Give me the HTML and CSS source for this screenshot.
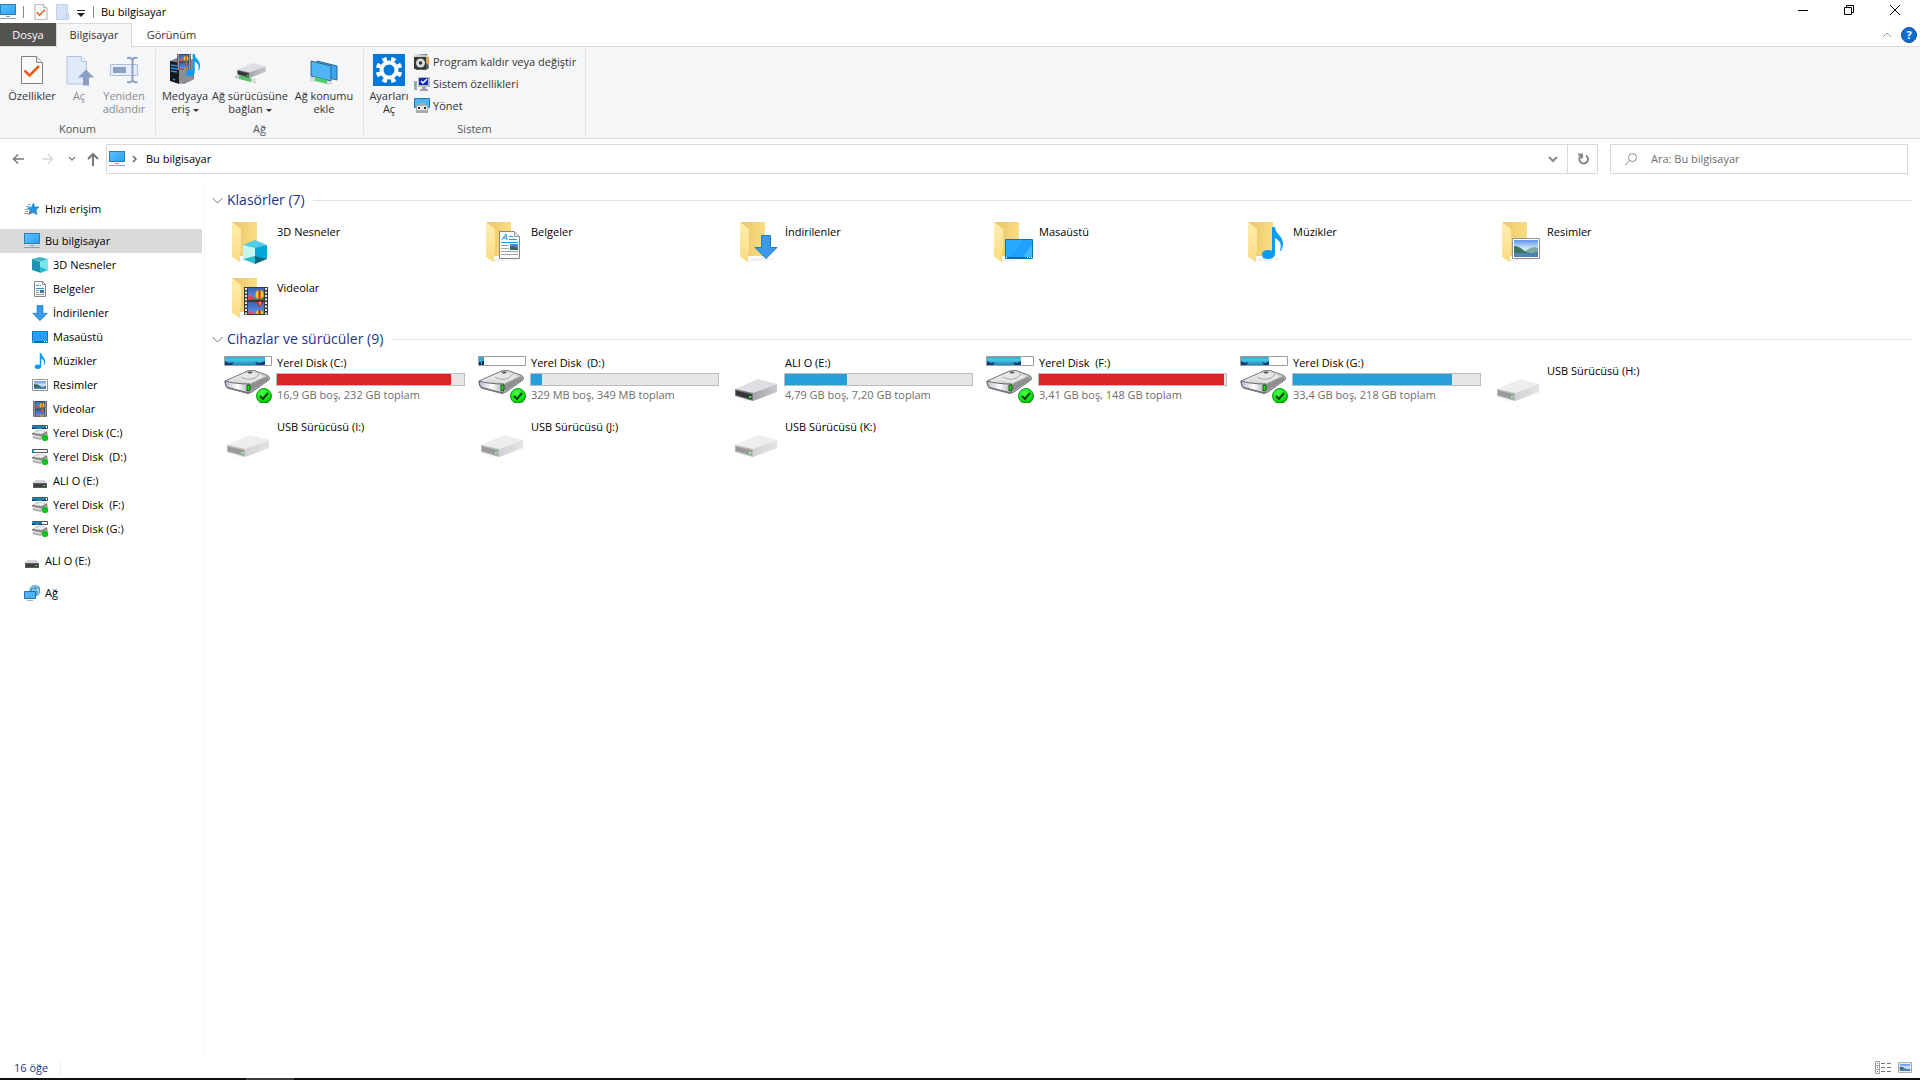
FILE: index.html
```html
<!DOCTYPE html>
<html lang="tr">
<head>
<meta charset="utf-8">
<meta name="viewport" content="width=device-width, initial-scale=1">
<title>Bu bilgisayar</title>
<link rel="stylesheet" href="styles.css">
</head>
<body>
<svg class="sprite" aria-hidden="true">
  <defs>
    <linearGradient id="g-screen" x1="0" y1="0" x2="1" y2="1"><stop offset="0" stop-color="#5fc0fd"/><stop offset=".55" stop-color="#3fb1fa"/><stop offset="1" stop-color="#2a9df0"/></linearGradient>
    <linearGradient id="g-back" x1="0" y1="0" x2="1" y2="0"><stop offset="0" stop-color="#eac666"/><stop offset="1" stop-color="#fbdd84"/></linearGradient>
    <linearGradient id="g-flap" x1="0" y1="0" x2="0" y2="1"><stop offset="0" stop-color="#ffeeb0"/><stop offset="1" stop-color="#fbdb82"/></linearGradient>
    <linearGradient id="g-cyan" x1="0" y1="0" x2="0" y2="1"><stop offset="0" stop-color="#35a9cc"/><stop offset=".35" stop-color="#4cc6e4"/><stop offset="1" stop-color="#1789b4"/></linearGradient>
    <linearGradient id="g-metal" x1="0" y1="0" x2="1" y2="1"><stop offset="0" stop-color="#f8f8f8"/><stop offset=".6" stop-color="#c9c9cb"/><stop offset="1" stop-color="#8f8f92"/></linearGradient>
    <linearGradient id="g-face" x1="0" y1="0" x2="1" y2="0"><stop offset="0" stop-color="#b9b9c6"/><stop offset=".5" stop-color="#fff"/><stop offset="1" stop-color="#a9a9b8"/></linearGradient>
    <linearGradient id="g-side" x1="0" y1="0" x2="1" y2="0"><stop offset="0" stop-color="#a5a6a9"/><stop offset="1" stop-color="#c9cacd"/></linearGradient>
    <linearGradient id="g-sky" x1="0" y1="0" x2="0" y2="1"><stop offset="0" stop-color="#5d93ee"/><stop offset=".5" stop-color="#d4e8f8"/><stop offset="1" stop-color="#5f8fba"/></linearGradient>
    <linearGradient id="g-film" x1="0" y1="0" x2="0" y2="1"><stop offset="0" stop-color="#3d63b8"/><stop offset="1" stop-color="#5b95ee"/></linearGradient>
    <radialGradient id="g-ok" cx=".4" cy=".3" r=".7"><stop offset="0" stop-color="#4dff4d"/><stop offset=".7" stop-color="#0be80f"/><stop offset="1" stop-color="#07a30b"/></radialGradient>
  </defs>

  <symbol id="pc" viewBox="0 0 16 16"><rect x=".5" y=".5" width="15" height="10" fill="url(#g-screen)" stroke="#2f7fae"/><path d="M6 12.500h4M0 14.500h16" stroke="#7fa6c4"/></symbol>
  <symbol id="check-page" viewBox="0 0 22 28"><path d="M.5.500h15l6 6v21H.5z" fill="#fafafa" stroke="#7d7d7d"/><path d="M15.500.500v6h6" fill="#e6e6e6" stroke="#8b8b8b"/><path d="M3.500 14.500l5 5L18 10" fill="none" stroke="#f2590d" stroke-width="2.500"/></symbol>
  <symbol id="blue-page" viewBox="0 0 14 16"><path d="M.5.500h11v9h1.500v6H.5z" fill="#d5e1f5" stroke="#c3d2ec"/><path d="M10.500 9.500v6" stroke="#b4c6e4"/></symbol>
  <symbol id="open-page" viewBox="0 0 28 32"><path d="M2 2.500h14.500l5 5V30H2z" fill="#e0eaf8" stroke="#b3c4e0"/><path d="M16.500 2.500v5h5" fill="#edf3fc" stroke="#b3c4e0"/><path d="M21 15.500l8 8h-5v8h-6v-8h-5z" fill="#8a9fc4"/></symbol>
  <symbol id="rename" viewBox="0 0 28 28"><path d="M.5 8.500h27v11H.5z" fill="#e7eefa" stroke="#adbfdc"/><path d="M3 11h13v6H3z" fill="#8c9fc4"/><path d="M17 2q4.500-1 5.500 2 1-3 5-2M22.500 3v22M17 26q4.500 1 5.500-2 1 3 5 2" fill="none" stroke="#8c9fc4" stroke-width="2"/></symbol>

  <symbol id="film" viewBox="0 0 24 28"><path d="M0 0h24v28H0z" fill="#3a3a3a"/><path d="M2 1v27M22 1v27" stroke="#e8e8e8" stroke-width="2" stroke-dasharray="2 1.500"/><path d="M4 1h16v12H4z" fill="url(#g-film)"/><path d="M4 15h16v12H4z" fill="url(#g-film)"/><path d="M4 13l4-4 4 3 8-2v3z" fill="#288041"/><path d="M4 9l3-1 4 4-7 1z" fill="#e0435b"/><ellipse cx="15.500" cy="7.500" rx="4" ry="4.500" fill="#f6cb19"/><path d="M14.500 3h2v9h-2z" fill="#bf2b2e"/><path d="M12 15h7l-3 5h-1z" fill="#c82e34"/><path d="M15 15h2l-1 4z" fill="#f6cb19"/><path d="M12 27q0-4 3.500-4t3.500 4z" fill="#f6cb19"/><path d="M4 24l5 1 2 2H4z" fill="#d9506b"/><path d="M14.500 23h2v4h-2z" fill="#b92128"/></symbol>
  <symbol id="note" viewBox="0 0 21 32"><path d="M10 0h3q0 4 4 8 4 4 4 9 0 3-2 7h-1q2-7-1-10-2-2-4-3v15q0 6-7 6-6 0-6-4.500Q0 23 6 23q2 0 4 .8z" fill="#079df6"/></symbol>
  <symbol id="cube" viewBox="0 0 24 24"><path d="M12 0l12 5-12 4L0 5z" fill="#50cfe4"/><path d="M0 5l12 3v10L0 19z" fill="#c9f3f4"/><path d="M12 8l12-3v14l-12-1z" fill="#04a7d9"/><path d="M0 19l12-3v8z" fill="#2bbfce"/><path d="M12 16l12 3-12 5z" fill="#05677f"/></symbol>
  <symbol id="cube-small" viewBox="0 0 16 16"><path d="M8 0l8 2-6 3L0 2z" fill="#3fb5c4"/><path d="M0 2l9 3v11l-9-3z" fill="#1c93b0"/><path d="M8 5l8-3v11l-8 3z" fill="#7de6ec"/><path d="M8 10l8 3-8 3z" fill="#27bccb"/></symbol>
  <symbol id="doc" viewBox="0 0 21 28"><path d="M.5.500h15l5 5v22H.5z" fill="#fbfbfb" stroke="#858585"/><path d="M15.500.500v5h5" fill="#e4e4e4" stroke="#979797"/><path d="M3 9l4-6 1 6M4 7h4M10 5.500h4M10 8.500h8M2 11.500h17" stroke="#2196d8" fill="none"/><path d="M2 14.500h8M2 17.500h8M2 20.500h17M2 23.500h17" stroke="#a6a6a6"/><path d="M11 13h8v6h-8z" fill="#4d8cc7"/><path d="M11 16l3-1 5 2v2h-8z" fill="#3c6a57"/></symbol>
  <symbol id="doc-small" viewBox="0 0 16 16"><path d="M2.500.500h8l3 3v12h-11z" fill="#fbfbfb" stroke="#858585"/><path d="M10.500.500v3h3" fill="none" stroke="#979797"/><path d="M4 4.500h3M8 4.500h1M4 7.500h8" stroke="#2196d8"/><path d="M4 9.500h3M4 11.500h3M4 13.500h8" stroke="#999"/><path d="M8 9h4v3H8z" fill="#42739c"/></symbol>
  <symbol id="arrow" viewBox="0 0 24 24"><path d="M7.500.500h9v12h6.500L12 23.500 1 12.500h6.500z" fill="#3c98e8" stroke="#1b7cc5"/></symbol>
  <symbol id="desk" viewBox="0 0 28 20"><path d="M.5.500h27v19H.5z" fill="#1fa2fd" stroke="#0b77b5"/><path d="M1 1h17L6 18H1z" fill="#27a9ff"/><path d="M18 18L27 6v12z" fill="#46b6ff"/><path d="M1 18.500h26" stroke="#09609a"/><path d="M1 18.500h1M22 18.500h1M24 18.500h1M26 18.500h1" stroke="#fff"/></symbol>
  <symbol id="desk-small" viewBox="0 0 16 16"><path d="M.5 2.500h15v11H.5z" fill="#1fa2fd" stroke="#0b77b5"/><path d="M1 12.500h14" stroke="#09609a"/><path d="M1 12.500h1M12 12.500h1M14 12.500h1" stroke="#fff"/></symbol>
  <symbol id="pic" viewBox="0 0 28 21"><path d="M.5.500h27v20H.5z" fill="#fff" stroke="#949494"/><path d="M2 2h24v17H2z" fill="url(#g-sky)"/><path d="M2 8q5 0 9 4t15 2v2H2z" fill="#39745a"/><path d="M15 12q6-5 11-2v4H14z" fill="#7eaa9d"/><path d="M2 15h24v4H2z" fill="#5184b5"/></symbol>
  <symbol id="pic-small" viewBox="0 0 16 12"><path d="M.5.500h15v11H.5z" fill="#fff" stroke="#949494"/><path d="M2 2h12v8H2z" fill="url(#g-sky)"/><path d="M2 5q4 0 6 2t6 0v1H2z" fill="#2f6b56"/><path d="M2 8h12v2H2z" fill="#4a7fae"/></symbol>

  <symbol id="folder" viewBox="0 0 48 48"><path d="M12 46l8-4h22l-4 2z" fill="#000" opacity=".05"/><path d="M8 6h25v34H15z" fill="url(#g-back)"/><path d="M8 6l9 7v22l-1 2v9l-8-5z" fill="url(#g-flap)"/></symbol>

  <symbol id="disk" viewBox="0 0 46 24"><path d="M1 11L24 .8l6-.3 14 5q1.500 1 1.500 4L28 22l-4 1.500L3 18q-2-2-2-7z" fill="url(#g-metal)" stroke="#757578"/><path d="M9 8L26 2l14 4-12 8z" fill="#e6e6e8"/><path d="M17 7q6 4 14 1l4-4" fill="none" stroke="#a5a5a8"/><path d="M1 11q10 3 25 3 1 5-1 9L4 17.500Q1 16 1 11z" fill="url(#g-face)" stroke="#66666f"/><path d="M27 13l17-7v4L27 21z" fill="#66666a" opacity=".55"/><path d="M23 15h3v5l-3 1z" fill="#27d51d" stroke="#1b5e17"/><ellipse cx="26" cy="2.500" rx="2.500" ry="1" fill="#555"/></symbol>
  <symbol id="ok" viewBox="0 0 16 16"><circle cx="8" cy="8" r="7.500" fill="url(#g-ok)" stroke="#159819"/><path d="M4 8l3 3 5-6" fill="none" stroke="#0a3f0c" stroke-width="2"/></symbol>
  <symbol id="usb" viewBox="0 0 42 22"><path d="M5 22l13-1 24-10-4 0z" opacity=".08"/><path d="M0 10L23 0l19 5-24 10z" fill="#dedfe3"/><path d="M18 14L42 5v8L18 22z" fill="url(#g-side)"/><path d="M0 10l18 4v8L0 17z" fill="#77787a"/><path d="M1 11.500l16 4v5L1 16z" fill="#343536"/><path d="M14 17h2.500v2H14z" fill="#3de24a"/></symbol>
  <symbol id="usb-small" viewBox="0 0 14 8"><path d="M2 0h10l2 3H0z" fill="#d3d4d7"/><path d="M0 3h14v5H0z" fill="#5b5c5e"/><path d="M1 4h12v3H1z" fill="#3f4042"/><path d="M10 5h2v1h-2z" fill="#35df43"/></symbol>

  <symbol id="disk-c" viewBox="0 0 48 48"><path d="M.5 1.500h47v9H.5z" fill="#fff" stroke="#9d9d9d"/><path d="M1 2h40v8H1z" fill="url(#g-cyan)"/><path d="M1 6l4 2 5-1-2 3H1zM31 7l5 1 5-2v4h-8z" fill="#123a86"/><use href="#disk" x="0" y="15" width="46" height="24"/><use href="#ok" x="32" y="33" width="16" height="16"/></symbol>
  <symbol id="disk-d" viewBox="0 0 48 48"><path d="M.5 1.500h47v9H.5z" fill="#fff" stroke="#9d9d9d"/><path d="M1 2h5v8H1z" fill="#2caed2"/><path d="M1 7h2v3H1zM4 6h2v4H4z" fill="#11265c"/><use href="#disk" x="0" y="15" width="46" height="24"/><use href="#ok" x="32" y="33" width="16" height="16"/></symbol>
  <symbol id="disk-f" viewBox="0 0 48 48"><path d="M.5 1.500h47v9H.5z" fill="#fff" stroke="#9d9d9d"/><path d="M1 2h34v8H1z" fill="url(#g-cyan)"/><path d="M1 6l4 2 4-1-2 3H1zM27 7l4 1 4-2v4h-6z" fill="#123a86"/><use href="#disk" x="0" y="15" width="46" height="24"/><use href="#ok" x="32" y="33" width="16" height="16"/></symbol>
  <symbol id="disk-g" viewBox="0 0 48 48"><path d="M.5 1.500h47v9H.5z" fill="#fff" stroke="#9d9d9d"/><path d="M1 2h28v8H1z" fill="url(#g-cyan)"/><path d="M1 6l4 2 3-1-1 3H1zM22 7l4 1 3-2v4h-5z" fill="#123a86"/><use href="#disk" x="0" y="15" width="46" height="24"/><use href="#ok" x="32" y="33" width="16" height="16"/></symbol>
  <symbol id="mini-body" viewBox="0 0 16 16"><path d="M0 8l6-3 9 1 1 4-6 4-9-2z" fill="#a9aaac"/><path d="M1 8l6-2.500 8 1L10 9z" fill="#ececec"/><path d="M0 8.500l9 1.500 6-3" fill="none" stroke="#6c6e70"/><path d="M1 10.500l8 2" stroke="#f2f2f2"/><path d="M1 12.500l8 2" stroke="#909294"/><circle cx="13" cy="13" r="3" fill="#13c51b" stroke="#0e9a16" stroke-width=".5"/></symbol>
  <symbol id="mini-full" viewBox="0 0 16 16"><path d="M.5.500h15v3H.5z" fill="#fff" stroke="#555"/><path d="M0 1h14v3H0z" fill="#1684b4"/><path d="M0 3h4v1H0zM10 3h4v1h-4z" fill="#0d3068"/><use href="#mini-body" width="16" height="16"/></symbol>
  <symbol id="mini-part" viewBox="0 0 16 16"><path d="M.5.500h15v3H.5z" fill="#fff" stroke="#555"/><path d="M0 1h10v3H0z" fill="#1684b4"/><path d="M0 3h3v1H0zM7 3h3v1H7z" fill="#0d3068"/><use href="#mini-body" width="16" height="16"/></symbol>
  <symbol id="mini-empty" viewBox="0 0 16 16"><path d="M.5.500h15v3H.5z" fill="#fff" stroke="#555"/><path d="M0 1h2v3H0z" fill="#1684b4"/><use href="#mini-body" width="16" height="16"/></symbol>

  <symbol id="star" viewBox="0 0 16 16"><path d="M9.500 2l1 4H15l-3 3 1 4.500-4-2-4.500 2L6 9.500 3.500 7l4-.8z" fill="#2294e2" stroke="#1873b8" stroke-width=".6"/><path d="M4 3.500h3M2 5.500h4M1 8.500h3M1 10.500h3M0 12.500h4" stroke="#63b4ea"/></symbol>
  <symbol id="globe-pc" viewBox="0 0 16 16"><circle cx="11" cy="5.500" r="5.500" fill="#4b9dcb"/><path d="M7 3q3 0 4-2.500M12 1q4 4 2 8M8 5h7" stroke="#b9dff0" fill="none"/><path d="M.5 6.500h11v7H.5z" fill="#50b4f6" stroke="#2175ac"/><path d="M3 15.500h6" stroke="#a5b3c0"/></symbol>

  <symbol id="media" viewBox="0 0 32 32"><path d="M1 7l12-5 12 5v18l-10 5-14-4z" fill="#777b82"/><path d="M1 7l9 2v21l-9-3z" fill="#17191d"/><path d="M2 11l6 1M2 14l6 1M2 17l6 1M4 25l2 1" stroke="#1596f5" stroke-width="1.500"/><path d="M10 9l14-4v21l-14 4z" fill="#8b8d92"/><use href="#film" x="8" y="0" width="14" height="16"/><use href="#note" x="16" y="0" width="16" height="22"/></symbol>
  <symbol id="net-drive" viewBox="0 0 32 20"><path d="M1 14l8 0 13 5M10 14l12 5" stroke="#c5c7c9" stroke-width="3"/><path d="M5 11l12 4v4L5 16z" fill="#54c866"/><use href="#usb" x="3" y="0" width="29" height="15"/><path d="M17 15l5 1v3l-5 0z" fill="#dbdddd"/></symbol>
  <symbol id="net-place" viewBox="0 0 28 26"><path d="M7 1l20 5v14L7 15z" fill="#39a8f1" stroke="#31678e"/><path d="M1 1l20 5v15L1 16z" fill="#4db5f6" stroke="#31678e"/><path d="M0 17l6 1v4l-6-1zM16 21l6 1v3l-6-1z" fill="#d8dadb"/><path d="M5 17l12 3v4L5 21z" fill="#55cf65"/></symbol>
  <symbol id="gear" viewBox="0 0 32 32"><path d="M0 0h32v32H0z" fill="#0078d7"/><circle cx="16" cy="16" r="7.500" fill="none" stroke="#fff" stroke-width="4"/><circle cx="16" cy="16" r="11.300" fill="none" stroke="#fff" stroke-width="4" pathLength="80" stroke-dasharray="5 5" stroke-dashoffset="7.500"/></symbol>
  <symbol id="program" viewBox="0 0 16 16"><path d="M2 1l11-1 2 14-3 2H2z" fill="#4f6558"/><path d="M9 2l6 1v8l-6-4z" fill="#e99d49"/><path d="M0 3h12v12H0z" fill="#35373a"/><path d="M1 1h13v2H1z" fill="#cacccb"/><circle cx="6.500" cy="9" r="4.500" fill="#d9dadb"/><circle cx="6.500" cy="9" r="1.700" fill="#2f3032"/></symbol>
  <symbol id="system" viewBox="0 0 16 14"><path d="M0 4h3v9H0z" fill="#a6abb0"/><path d="M1 6h1v2H1z" fill="#34ce4a"/><path d="M4 0h12v10H4z" fill="#b8bbc1"/><path d="M5 1h9v7H5z" fill="#1428bd"/><path d="M7 4l2 2 4-4" fill="none" stroke="#fff" stroke-width="1.500"/><path d="M8 10h4v2h2v2H6v-2h2z" fill="#a1a4a9"/></symbol>
  <symbol id="manage" viewBox="0 0 16 16"><path d="M.5.500h15v9H.5z" fill="#4bb5f7" stroke="#2878ab"/><path d="M5 5h6v2h3v8H2V7h3z" fill="#a9abad"/><path d="M3 8h10v4H3z" fill="#e5e6e6"/><path d="M4 9h2v2H4zM10 9h2v2h-2z" fill="#333"/></symbol>
  <symbol id="details" viewBox="0 0 17 13"><path d="M.5.500h4v12h-4zM.5 4.500h4M.5 8.500h4" fill="#fff" stroke="#a0a0a0"/><path d="M2 2.500h1" stroke="#3d8a4e"/><path d="M2 6.500h1" stroke="#3e84c5"/><path d="M2 10.500h1" stroke="#d33"/><path d="M6 2.500h4M12 2.500h4M6 6.500h4M12 6.500h4M6 10.500h4M12 10.500h4" stroke="#777"/></symbol>
</svg>

<header class="titlebar">
  <svg class="i16"><use href="#pc"/></svg>
  <span class="sep"></span>
  <button class="quick" aria-label="Özellikler"><svg class="i16"><use href="#check-page"/></svg></button>
  <button class="quick" aria-label="Yeni klasör"><svg class="i16"><use href="#blue-page"/></svg></button>
  <button class="customize" aria-label="Özelleştir"><svg width="8" height="7"><path d="M0 .5h8" stroke="#222"/><path d="M0 3h8L4 7z" fill="#222"/></svg></button>
  <span class="sep near"></span>
  <h1>Bu bilgisayar</h1>
  <div class="window-controls">
    <button aria-label="Küçült"><svg width="10" height="10"><path d="M0 5.500h10" stroke="#000"/></svg></button>
    <button aria-label="Geri yükle"><svg width="10" height="10" fill="none" stroke="#000"><path d="M.5 2.500h7v7h-7zM2.500 2.500v-2h7v7h-2"/></svg></button>
    <button aria-label="Kapat"><svg width="10" height="10" stroke="#000"><path d="M0 0l10 10M10 0L0 10"/></svg></button>
  </div>
</header>

<nav class="tabs">
  <button class="tab file">Dosya</button>
  <button class="tab active">Bilgisayar</button>
  <button class="tab view">Görünüm</button>
  <div class="tabs-end">
    <button aria-label="Şeridi küçült"><svg width="10" height="6" fill="none" stroke="#9a9a9a"><path d="M1 5l4-4 4 4"/></svg></button>
    <button class="help" aria-label="Yardım">?</button>
  </div>
</nav>

<section class="ribbon">
  <div class="group">
    <div class="tools">
      <button class="tool w64"><svg class="check-page"><use href="#check-page"/></svg><span>Özellikler</span></button>
      <button class="tool w30" disabled><svg><use href="#open-page"/></svg><span>Aç</span></button>
      <button class="tool w60" disabled><svg class="rename"><use href="#rename"/></svg><span>Yeniden<br>adlandır</span></button>
    </div>
    <h2>Konum</h2>
  </div>
  <div class="group network">
    <div class="tools">
      <button class="tool w50"><svg><use href="#media"/></svg><span>Medyaya<br>eriş <i class="caret"></i></span></button>
      <button class="tool w80"><svg class="low"><use href="#net-drive"/></svg><span>Ağ sürücüsüne<br>bağlan <i class="caret"></i></span></button>
      <button class="tool w68"><svg class="low"><use href="#net-place"/></svg><span>Ağ konumu<br>ekle</span></button>
    </div>
    <h2>Ağ</h2>
  </div>
  <div class="group system">
    <div class="tools">
      <button class="tool w46"><svg><use href="#gear"/></svg><span>Ayarları<br>Aç</span></button>
      <div class="stack">
        <button><svg class="i16"><use href="#program"/></svg>Program kaldır veya değiştir</button>
        <button><svg class="i16"><use href="#system"/></svg>Sistem özellikleri</button>
        <button><svg class="i16"><use href="#manage"/></svg>Yönet</button>
      </div>
    </div>
    <h2>Sistem</h2>
  </div>
</section>

<div class="address-row">
  <div class="history">
    <button aria-label="Geri"><svg width="13" height="12" fill="none" stroke="#777" stroke-width="1.500"><path d="M1 6h11M6 1.500L1.500 6 6 10.500"/></svg></button>
    <button aria-label="İleri"><svg width="13" height="12" fill="none" stroke="#d8d8d8" stroke-width="1.500"><path d="M0 6h11M6 1.500L10.500 6 6 10.500"/></svg></button>
    <button class="recent" aria-label="Son konumlar"><svg width="8" height="5" fill="none" stroke="#888" stroke-width="1.500"><path d="M1 0l3 3 3-3"/></svg></button>
    <button class="up" aria-label="Yukarı"><svg width="12" height="13" fill="none" stroke="#777" stroke-width="2"><path d="M6 13V1M1 6l5-5 5 5"/></svg></button>
  </div>
  <div class="address">
    <svg class="i16"><use href="#pc"/></svg>
    <svg class="crumb" width="5" height="8" fill="none" stroke="#666" stroke-width="1.500"><path d="M1 1l3 3-3 3"/></svg>
    <a href="#bu-bilgisayar">Bu bilgisayar</a>
    <button class="drop" aria-label="Önceki konumlar"><svg width="10" height="7" fill="none" stroke="#888" stroke-width="2"><path d="M1 1l4 4 4-4"/></svg></button>
    <button class="refresh" aria-label="Yenile"><svg width="12" height="12" fill="none" stroke="#888" stroke-width="2"><path d="M9 2.500a4.300 4.300 0 1 1-5 .2M1 1.500h4v4"/></svg></button>
  </div>
  <label class="search"><svg width="12" height="12" fill="none" stroke="#8a8a8a"><circle cx="7.500" cy="4.500" r="4"/><path d="M5 7.500L0 12"/></svg><input type="search" placeholder="Ara: Bu bilgisayar" aria-label="Ara"></label>
</div>

<div class="body">
  <nav class="tree">
    <a class="top" href="#hizli"><svg class="i16"><use href="#star"/></svg>Hızlı erişim</a>
    <div class="branch">
      <a class="top selected" href="#bu-bilgisayar"><svg class="i16"><use href="#pc"/></svg>Bu bilgisayar</a>
      <a href="#3d"><svg class="i16"><use href="#cube-small"/></svg>3D Nesneler</a>
      <a href="#belgeler"><svg class="i16"><use href="#doc-small"/></svg>Belgeler</a>
      <a href="#indirilenler"><svg class="i16"><use href="#arrow"/></svg>İndirilenler</a>
      <a href="#masaustu"><svg class="i16"><use href="#desk-small"/></svg>Masaüstü</a>
      <a href="#muzikler"><svg class="i16"><use href="#note"/></svg>Müzikler</a>
      <a href="#resimler"><svg class="i16"><use href="#pic-small"/></svg>Resimler</a>
      <a href="#videolar"><svg class="i16"><use href="#film"/></svg>Videolar</a>
      <a href="#c"><svg class="i16"><use href="#mini-full"/></svg>Yerel Disk (C:)</a>
      <a href="#d"><svg class="i16"><use href="#mini-empty"/></svg>Yerel Disk &nbsp;(D:)</a>
      <a href="#e"><svg class="i16 usb-mini"><use href="#usb-small"/></svg>ALI O (E:)</a>
      <a href="#f"><svg class="i16"><use href="#mini-full"/></svg>Yerel Disk &nbsp;(F:)</a>
      <a href="#g"><svg class="i16"><use href="#mini-part"/></svg>Yerel Disk (G:)</a>
    </div>
    <a class="top" href="#e"><svg class="i16 usb-mini"><use href="#usb-small"/></svg>ALI O (E:)</a>
    <a class="top" href="#ag"><svg class="i16"><use href="#globe-pc"/></svg>Ağ</a>
  </nav>

  <main>
    <section>
      <h2><svg width="11" height="7" fill="none" stroke="#777"><path d="M.5 1l5 5 5-5"/></svg>Klasörler (7)</h2>
      <div class="items">
        <a class="item" id="3d" href="#3d"><svg viewBox="0 0 48 48"><use href="#folder"/><use href="#cube" x="19" y="24" width="24" height="24"/></svg><span>3D Nesneler</span></a>
        <a class="item" id="belgeler" href="#belgeler"><svg viewBox="0 0 48 48"><use href="#folder"/><use href="#doc" x="21" y="15" width="21" height="28"/></svg><span>Belgeler</span></a>
        <a class="item" id="indirilenler" href="#indirilenler"><svg viewBox="0 0 48 48"><use href="#folder"/><use href="#arrow" x="22" y="19" width="24" height="24"/></svg><span>İndirilenler</span></a>
        <a class="item" id="masaustu" href="#masaustu"><svg viewBox="0 0 48 48"><use href="#folder"/><use href="#desk" x="19" y="23" width="28" height="20"/></svg><span>Masaüstü</span></a>
        <a class="item" id="muzikler" href="#muzikler"><svg viewBox="0 0 48 48"><use href="#folder"/><use href="#note" x="22" y="11" width="21" height="32"/></svg><span>Müzikler</span></a>
        <a class="item" id="resimler" href="#resimler"><svg viewBox="0 0 48 48"><use href="#folder"/><use href="#pic" x="18" y="22" width="28" height="21"/></svg><span>Resimler</span></a>
        <a class="item" id="videolar" href="#videolar"><svg viewBox="0 0 48 48"><use href="#folder"/><use href="#film" x="20" y="15" width="24" height="28"/></svg><span>Videolar</span></a>
      </div>
    </section>
    <section>
      <h2><svg width="11" height="7" fill="none" stroke="#777"><path d="M.5 1l5 5 5-5"/></svg>Cihazlar ve sürücüler (9)</h2>
      <div class="items">
        <a class="item drive" id="c" href="#c"><svg><use href="#disk-c"/></svg><div><span>Yerel Disk (C:)</span><div class="usage full"><div style="width:93%"></div></div><small>16,9 GB boş, 232 GB toplam</small></div></a>
        <a class="item drive" id="d" href="#d"><svg><use href="#disk-d"/></svg><div><span>Yerel Disk &nbsp;(D:)</span><div class="usage"><div style="width:6%"></div></div><small>329 MB boş, 349 MB toplam</small></div></a>
        <a class="item drive" id="e" href="#e"><svg viewBox="0 0 48 48"><use href="#usb" x="3" y="24" width="42" height="22"/></svg><div><span>ALI O (E:)</span><div class="usage"><div style="width:33%"></div></div><small>4,79 GB boş, 7,20 GB toplam</small></div></a>
        <a class="item drive" id="f" href="#f"><svg><use href="#disk-f"/></svg><div><span>Yerel Disk &nbsp;(F:)</span><div class="usage full"><div style="width:99%"></div></div><small>3,41 GB boş, 148 GB toplam</small></div></a>
        <a class="item drive" id="g" href="#g"><svg><use href="#disk-g"/></svg><div><span>Yerel Disk (G:)</span><div class="usage"><div style="width:85%"></div></div><small>33,4 GB boş, 218 GB toplam</small></div></a>
        <a class="item" href="#h"><svg class="empty" viewBox="0 0 48 48"><use href="#usb" x="3" y="24" width="42" height="22"/></svg><span>USB Sürücüsü (H:)</span></a>
        <a class="item" href="#i"><svg class="empty" viewBox="0 0 48 48"><use href="#usb" x="3" y="24" width="42" height="22"/></svg><span>USB Sürücüsü (I:)</span></a>
        <a class="item" href="#j"><svg class="empty" viewBox="0 0 48 48"><use href="#usb" x="3" y="24" width="42" height="22"/></svg><span>USB Sürücüsü (J:)</span></a>
        <a class="item" href="#k"><svg class="empty" viewBox="0 0 48 48"><use href="#usb" x="3" y="24" width="42" height="22"/></svg><span>USB Sürücüsü (K:)</span></a>
      </div>
    </section>
  </main>
</div>

<footer class="status">
  <span>16 öğe</span>
  <div class="views">
    <button aria-label="Ayrıntılar"><svg width="17" height="13"><use href="#details"/></svg></button>
    <button aria-label="Büyük simgeler"><svg width="14" height="11"><use href="#pic-small"/></svg></button>
  </div>
</footer>
<div class="taskbar"><span></span></div>
</body>
</html>
```
FILE: styles.css
```css
* { box-sizing: border-box; }

body {
  display: flex;
  flex-direction: column;
  min-height: 100vh;
  margin: 0;
  background: #fff;
  color: #000;
  font: 11px/16px "Open Sans", "Noto Sans", sans-serif;
}

button {
  display: flex;
  align-items: center;
  justify-content: center;
  padding: 0;
  border: 0;
  background: none;
  color: inherit;
  font: inherit;
}

a { color: inherit; text-decoration: none; }
h1, h2 { margin: 0; font-size: inherit; font-weight: 400; }
svg { flex: none; }
.sprite { position: absolute; width: 0; height: 0; }
.i16 { width: 16px; height: 16px; }

/* Title bar */
.titlebar { display: flex; align-items: center; height: 23px; }
.sep { width: 1px; height: 12px; margin: 0 9px 0 7px; background: #888; }
.sep.near { margin: 0 7px 0 8px; }
.quick { width: 16px; margin-right: 6px; }
.customize { width: 8px; margin-top: 3px; }
.window-controls { display: flex; margin: 0 2px 4px auto; }
.window-controls button { width: 46px; height: 16px; }

/* Tabs */
.tabs { display: flex; height: 24px; border-bottom: 1px solid #dadbdc; color: #333; }
.tab { height: 23px; }
.file { width: 56px; background: #555350; color: #fff; }
.active { width: 76px; height: 24px; padding-bottom: 1px; border: 1px solid #dadbdc; border-bottom: 0; background: #f5f6f7; }
.view { width: 79px; }
.tabs-end { display: flex; align-items: center; gap: 9px; margin-left: auto; padding-right: 3px; }
.help { width: 16px; height: 16px; border: 1px solid #124d86; border-radius: 50%; background: #0c6fd0; color: #fff; font-weight: 700; }

/* Ribbon */
.ribbon { display: flex; height: 92px; padding-top: 2px; border-bottom: 1px solid #dadbdc; background: #f5f6f7; color: #333; }
.group { display: flex; flex-direction: column; width: 156px; height: 86px; border-right: 1px solid #e1e2e3; }
.network { width: 208px; }
.network .tools { padding-left: 4px; }
.system { width: 222px; }
.system .tools { padding-left: 2px; }
.tools { display: flex; flex: 1; padding-top: 5px; }
.group h2 { color: #555; line-height: 12px; text-align: center; }
.tool { flex-direction: column; justify-content: flex-start; gap: 3px; line-height: 13px; white-space: nowrap; }
.tool svg { width: 32px; height: 32px; }
.tool .check-page, .tool .rename { width: 28px; height: 28px; margin: 2px 0; }
.tool .low { height: 26px; margin: 6px 0 0; }
.tool:disabled { color: #8b8d91; }
.w30 { width: 30px; }
.w46 { width: 46px; }
.w50 { width: 50px; }
.w60 { width: 60px; }
.w64 { width: 64px; }
.w68 { width: 68px; }
.w80 { width: 80px; }
.caret { display: inline-block; border: 3px solid transparent; border-top-color: #333; border-bottom: 0; vertical-align: middle; }
.stack { display: flex; flex-direction: column; gap: 6px; padding-left: 2px; }
.stack button { justify-content: flex-start; gap: 3px; white-space: nowrap; }

/* Address bar */
.address-row { display: flex; align-items: center; padding: 5px 12px 0 0; }
.history { display: flex; align-items: center; width: 106px; padding-left: 12px; }
.history button { width: 13px; margin-right: 17px; }
.history .recent { width: 8px; margin: 0 11px 0 -4px; }
.history .up { width: 12px; margin: 0; }
.address { display: flex; flex: 1; align-items: center; height: 30px; padding-left: 2px; border: 1px solid #d9d9d9; }
.crumb { margin: 0 9px 0 7px; }
.drop { width: 29px; margin-left: auto; }
.refresh { align-self: stretch; width: 30px; border-left: 1px solid #d9d9d9; }
.search { display: flex; align-items: center; gap: 14px; width: 298px; height: 30px; margin-left: 12px; padding-left: 14px; border: 1px solid #d9d9d9; }
.search input { flex: 1; min-width: 0; padding: 0; border: 0; outline: 0; background: none; font: inherit; }
.search input::placeholder { color: #6d6d6d; opacity: 1; }

/* Body */
.body { display: flex; flex: 1; padding-top: 9px; }
.tree { display: flex; flex-direction: column; gap: 8px; width: 205px; padding: 14px 2px 0 0; border-right: 1px solid #f5f5f5; }
.tree a { display: flex; align-items: center; gap: 5px; height: 24px; padding-left: 32px; white-space: pre; }
.tree .top { padding-left: 24px; }
.tree .selected { background: #d9d9d9; }
.tree .usb-mini { height: 8px; margin-top: 5px; }

main { flex: 1; padding: 5px 8px 0 7px; }
main h2 { display: flex; align-items: center; gap: 4px; height: 24px; color: #1e3287; font-size: 14px; line-height: 24px; }
main h2::after { flex: 1; height: 1px; margin-left: 4px; background: #e2e2e2; content: ""; }
main section { margin-bottom: 3px; }
.items { display: grid; grid-template-columns: repeat(auto-fill, 254px); padding-left: 8px; }
.item { display: flex; gap: 5px; padding: 4px; }
.item svg { width: 48px; height: 48px; overflow: visible; }
.item > span { padding-top: 8px; }
.item span, .item small { display: block; white-space: pre; }
.drive { gap: 4px; }
.drive span, .drive small { padding-left: 1px; }
.item small { color: #6d6d6d; font-size: inherit; }
.usage { width: 189px; height: 13px; margin: 2px 0 1px; border: 1px solid #bcbcbc; background: #e6e6e6; }
.usage div { height: 11px; background: #26a0da; }
.usage.full div { background: #da2626; }
.empty { opacity: .5; }

/* Status bar */
.status { display: flex; align-items: center; justify-content: space-between; height: 21px; padding: 0 8px 0 14px; color: #1e3287; }
.status > span { padding-right: 12px; border-right: 1px solid #f0f0f0; }
.views { display: flex; align-items: center; gap: 6px; }
.taskbar { height: 2px; padding-left: 246px; background: #101010; }
.taskbar span { display: block; width: 48px; height: 2px; background: #3c3c3c; }
```
